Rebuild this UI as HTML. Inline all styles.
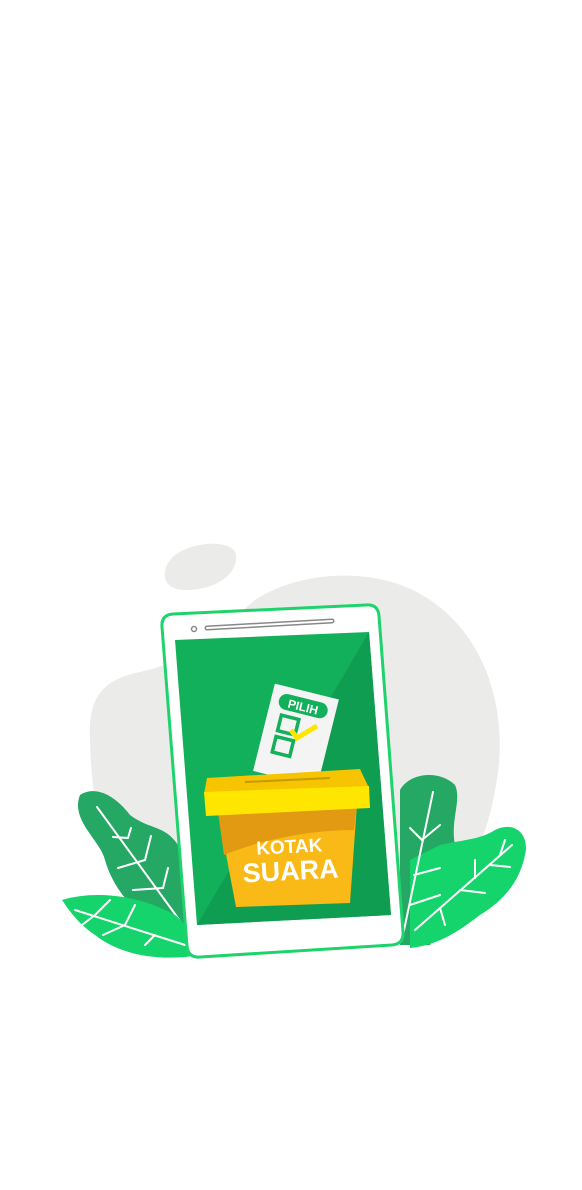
<!DOCTYPE html>
<html><head><meta charset="utf-8"><style>
html,body{margin:0;padding:0;background:#fff;width:582px;height:1190px;overflow:hidden}
svg{position:absolute;left:0;top:0}
</style></head><body>
<svg width="582" height="1190" viewBox="0 0 582 1190" xmlns="http://www.w3.org/2000/svg">
<!-- gray blobs -->
<path d="M175 555 C195 540 235 540 236 555 C238 575 215 590 185 590 C160 590 160 568 175 555Z" fill="#ebebea"/>
<path d="M255 600 C300 570 380 565 430 600 C490 640 510 720 495 790 C485 850 460 890 420 910 L140 910 C110 880 92 820 90 740 C88 700 100 680 140 672 C190 662 225 625 255 600Z" fill="#ebebea"/>
<!-- left leaves -->
<path d="M80 795 C95 785 115 795 130 815 C150 830 165 825 178 845 C190 870 185 905 195 935 L165 935 C140 915 115 895 105 860 C100 840 70 820 80 795Z" fill="#24a864"/>
<g stroke="#fff" stroke-width="2" fill="none" stroke-linecap="round">
<path d="M97 807 L183 925"/><path d="M128 838 L113 837"/><path d="M128 838 L131 828"/><path d="M145 860 L118 868"/><path d="M145 860 L151 836"/><path d="M163 888 L133 890"/><path d="M163 888 L168 868"/></g>
<path d="M62 900 C95 890 140 895 175 915 C188 925 195 940 200 955 C160 962 120 955 95 935 C80 925 70 912 62 900Z" fill="#14d46b"/>
<g stroke="#fff" stroke-width="2" fill="none" stroke-linecap="round">
<path d="M75 910 L185 945"/><path d="M95 915 L110 900"/><path d="M95 915 L82 925"/><path d="M125 925 L135 905"/><path d="M125 925 L103 935"/><path d="M155 935 L145 945"/></g>
<!-- right leaves -->
<path d="M400 790 C410 772 440 770 455 785 C462 800 450 820 455 845 C460 875 450 915 430 945 L400 945Z" fill="#24a864"/>
<path d="M440 845 C460 840 480 840 495 830 C515 820 530 835 525 855 C520 880 505 900 480 915 C460 930 440 945 410 948 L410 860Z" fill="#14d46b"/>
<g stroke="#fff" stroke-width="2" fill="none" stroke-linecap="round">
<path d="M433 792 L403 935"/><path d="M422 840 L410 828"/><path d="M422 840 L440 825"/><path d="M414 875 L440 868"/><path d="M410 905 L440 895"/>
<path d="M512 845 L415 930"/><path d="M500 855 L505 840"/><path d="M490 865 L510 867"/><path d="M475 878 L475 860"/><path d="M460 890 L485 893"/><path d="M440 908 L445 925"/></g>
<!-- phone -->
<path d="M173 614 L366 605 Q378 604 379 616 L403 932 Q404 944 392 945 L200 957 Q188 958 187 946 L162 627 Q161 615 173 614Z" fill="#fff" stroke="#1fd36c" stroke-width="3"/>
<circle cx="194" cy="629" r="2.5" fill="none" stroke="#888" stroke-width="1.5"/>
<path d="M207 628 L332 621" stroke="#888" stroke-width="5" stroke-linecap="round"/>
<path d="M207 628 L332 621" stroke="#fff" stroke-width="2" stroke-linecap="round"/>
<path d="M175 640 L369 632 L391 915 L197 925Z" fill="#12b05a"/>
<path d="M369 632 L391 915 L197 925Z" fill="#0f9d52"/>
<!-- ballot -->
<g transform="rotate(14 295 735)">
<rect x="263" y="690" width="66" height="90" fill="#f4f4f4"/>
<rect x="271" y="697" width="50" height="16" rx="8" fill="#12b05a"/>
<text x="296" y="710" font-family="Liberation Sans,sans-serif" font-weight="bold" font-size="12" fill="#fff" text-anchor="middle">PILIH</text>
<rect x="277" y="719" width="18" height="16" fill="none" stroke="#12b05a" stroke-width="3.5"/>
<rect x="277" y="741" width="18" height="16" fill="none" stroke="#12b05a" stroke-width="3.5"/>
</g>
<path d="M291 730 L297 738 L317 726" stroke="#ffe600" stroke-width="5" fill="none"/>
<!-- box -->
<path d="M218 812 L357 804 L350 903 L236 907Z" fill="#f9b916"/>
<path d="M218 812 L357 804 L354 830 C310 830 260 840 224 855Z" fill="#e29a12"/>
<path d="M207 778 L360 769 L369 788 L204 794Z" fill="#f6c400"/>
<path d="M204 792 L369 786 L370 808 L206 816Z" fill="#ffe600"/>
<path d="M245 782 L330 778" stroke="#c59a00" stroke-width="2"/>
<g transform="rotate(-3 290 860)" font-family="Liberation Sans,sans-serif" font-weight="bold" fill="#fff" text-anchor="middle">
<text x="290" y="853" font-size="19">KOTAK</text>
<text x="290" y="880" font-size="27">SUARA</text></g>
</svg>
</body></html>
